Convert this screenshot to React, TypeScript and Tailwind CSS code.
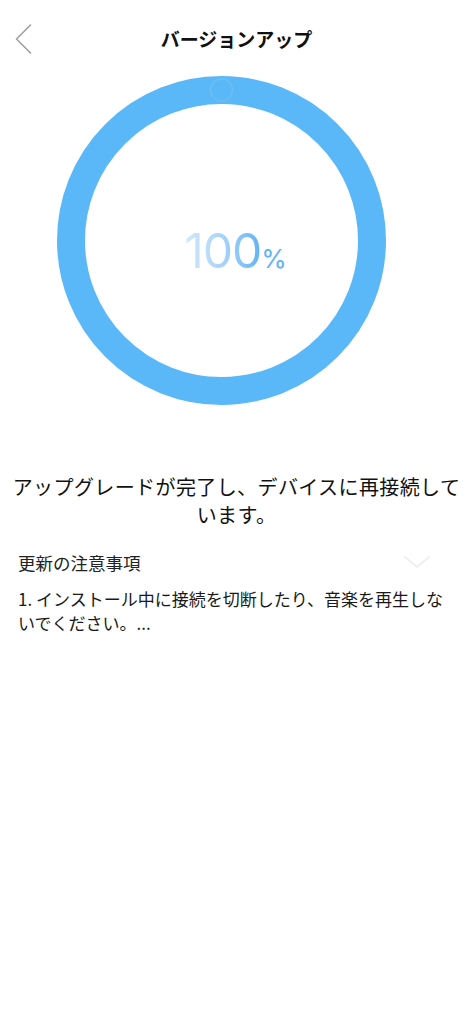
import React from "react";

export default function App() {
  const jp = { fontFamily: '"Noto Sans CJK JP", "Noto Sans", sans-serif' };
  return (
    <div className="w-[473px] min-h-[1024px] bg-white" style={jp}>
      {/* header */}
      <div className="relative flex h-[76px] items-center justify-center">
        <div className="absolute left-[15px] top-[24px]">
          <svg width="17" height="30" viewBox="0 0 17 30" fill="none">
            <path d="M15.5 1 L1.5 15 L15.5 29" stroke="#a0a0a0" strokeWidth="1.6" strokeLinecap="round" strokeLinejoin="round" />
          </svg>
        </div>
        <h1 className="text-[19px] font-bold text-[#111] leading-none">バージョンアップ</h1>
      </div>

      {/* ring */}
      <div className="ml-[57px] grid h-[329px] w-[329px] place-items-center">
        <svg className="col-start-1 row-start-1" width="329" height="329" viewBox="0 0 329 329">
          <circle cx="164.5" cy="164.5" r="150.5" fill="none" stroke="#5bb8f8" strokeWidth="28" />
          <circle cx="164.5" cy="14" r="11" fill="none" stroke="#7cc4e8" strokeWidth="1.5" opacity="0.5" />
        </svg>
        <div
          className="col-start-1 row-start-1 ml-[28px] mt-[20px] flex items-baseline"
          style={{ fontFamily: 'Inter, "Open Sans", sans-serif' }}
        >
          <span className="bg-gradient-to-r from-[#d4eafc] via-[#a8d4f8] to-[#62b3f3] bg-clip-text text-[48px] font-normal leading-none tracking-[-1px] text-transparent">
            100
          </span>
          <span className="text-[26px] font-normal leading-none text-[#62b3f3]">%</span>
        </div>
      </div>

      {/* status text */}
      <p className="mt-[68px] px-[10px] text-center text-[20px] leading-[28px] tracking-[0.4px] text-[#111]">
        アップグレードが完了し、デバイスに再接続しています。
      </p>

      {/* notes */}
      <div className="mt-[22px] px-[18px]">
        <div className="flex items-center justify-between">
          <span className="text-[17.5px] leading-[24px] text-[#222]">更新の注意事項</span>
          <svg className="mr-[23px]" width="30" height="16" viewBox="0 0 30 16" fill="none">
            <path d="M3 2 L15 12 L27 2" stroke="#efefef" strokeWidth="2" strokeLinecap="round" strokeLinejoin="round" />
          </svg>
        </div>
        <p className="mt-[12px] text-[17px] leading-[24px] text-[#1a1a1a]">
          1. インストール中に接続を切断したり、音楽を再生しないでください。...
        </p>
      </div>
    </div>
  );
}
